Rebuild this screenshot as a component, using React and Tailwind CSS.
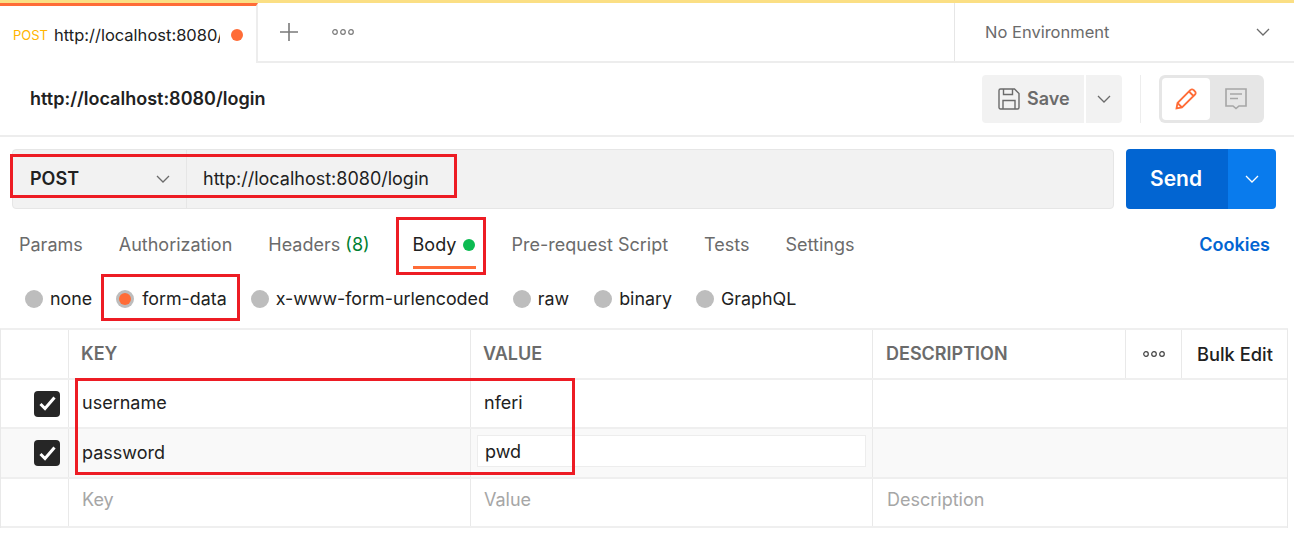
import React from "react";

const Chevron = ({ className = "", stroke = "#6b6b6b" }) => (
  <svg width="14" height="8" viewBox="0 0 14 8" fill="none" className={className}>
    <path d="M1 1l6 6 6-6" stroke={stroke} strokeWidth="1.3" />
  </svg>
);

const Dots = ({ stroke = "#6b6b6b" }) => (
  <svg width="22" height="6" viewBox="0 0 22 6" fill="none">
    <circle cx="3" cy="3" r="2.3" stroke={stroke} strokeWidth="1.2" />
    <circle cx="11" cy="3" r="2.3" stroke={stroke} strokeWidth="1.2" />
    <circle cx="19" cy="3" r="2.3" stroke={stroke} strokeWidth="1.2" />
  </svg>
);

const Check = () => (
  <div className="w-[26px] h-[26px] rounded-[4px] bg-[#262626] flex items-center justify-center">
    <svg width="17" height="15" viewBox="0 0 17 15" fill="none">
      <path d="M1.500 8l4.500 4.500 9.500-11" stroke="#fff" strokeWidth="3" />
    </svg>
  </div>
);

const Radio = ({ label, active, className = "" }) => (
  <div className={`flex items-center ${active ? "gap-[8px]" : "gap-[7px]"} ${className}`}>
    <div className="w-[18px] h-[18px] rounded-full bg-[#bdbdbd] flex items-center justify-center">
      {active && <div className="w-[12px] h-[12px] rounded-full bg-[#ff6c37]" />}
    </div>
    <span className="text-[#212121] text-[17.85px]">{label}</span>
  </div>
);

const Row = ({ bg = "bg-white", h, check, k, v, kc = "text-[#212121]", pb = "pb-[2px]", children }) => (
  <div className={`flex border-b-2 border-[#efefef] ${bg} ${h}`}>
    <div className="w-[68px] border-r border-[#e9e9e9] flex items-center justify-end pr-[8px] shrink-0">{check && <Check />}</div>
    <div className={`w-[402px] border-r border-[#e9e9e9] flex items-center pl-[13px] shrink-0 ${pb} ${kc}`}>{k}</div>
    <div className={`w-[402px] border-r border-[#e9e9e9] flex items-center pl-[13px] shrink-0 ${pb} ${kc}`}>{v}</div>
    <div className={`flex-1 flex items-center pl-[14px] ${pb} ${kc}`}>{children}</div>
  </div>
);

const Tab = ({ children, className = "" }) => <span className={`text-[#6b6b6b] ${className}`}>{children}</span>;

export default function App() {
  return (
    <div className="relative w-[1294px] h-[543px] overflow-hidden bg-white text-[18px] leading-[24px] font-['Inter','Liberation_Sans',sans-serif]">
      <div className="h-[3px] bg-[#fbdf84]" />
      {/* tab bar */}
      <div className="flex h-[60px] border-b-2 border-[#ededed]">
        <div className="w-[258px] h-[60px] border-t-[3px] border-[#ff6c37] border-r-2 border-r-[#ededed] bg-white flex items-center pl-[13px] shrink-0">
          <span className="text-[13px] text-[#ffb400] mr-[6px]">POST</span>
          <span className="w-[166px] overflow-hidden whitespace-nowrap text-[#212121] text-[16.5px]">http://localhost:8080/login</span>
          <span className="ml-[11px] w-[12px] h-[12px] rounded-full bg-[#ff6c37]" />
        </div>
        <div className="flex-1 flex items-center">
          <svg width="20" height="20" viewBox="0 0 20 20" className="ml-[21px]">
            <path d="M10 1v18M1 10h18" stroke="#7a7a7a" strokeWidth="1.6" />
          </svg>
          <div className="ml-[33px]"><Dots stroke="#7a7a7a" /></div>
        </div>
        <div className="w-[340px] border-l border-[#e6e6e6] flex items-center pl-[30px] pr-[24px] justify-between shrink-0 text-[#6b6b6b] text-[16.5px]">
          <span>No Environment</span>
          <Chevron />
        </div>
      </div>
      {/* title row */}
      <div className="flex items-center h-[74px] border-b-2 border-[#ededed] pl-[30px]">
        <span className="font-semibold text-[#212121]">http://localhost:8080/login</span>
        <div className="ml-auto flex items-center pr-[30px]">
          <div className="w-[102px] h-[48px] rounded-l-[4px] bg-[#f2f2f2] flex items-center pl-[16px] gap-[7px]">
            <svg width="22" height="22" viewBox="0 0 22 22" fill="none" stroke="#6b6b6b" strokeWidth="1.4">
              <path d="M1 2.500A1.500 1.500 0 0 1 2.500 1H16.500l4.500 4.500v14a1.500 1.500 0 0 1-1.500 1.500h-17A1.500 1.500 0 0 1 1 19.500z" />
              <path d="M5.500 1v5.500h9V1M5 21v-8.500h12V21" />
            </svg>
            <span className="font-semibold text-[#6b6b6b]">Save</span>
          </div>
          <div className="ml-[2px] w-[36px] h-[48px] rounded-r-[4px] bg-[#f2f2f2] flex items-center justify-center"><Chevron /></div>
          <div className="ml-[18px] w-px h-[48px] bg-[#ededed]" />
          <div className="ml-[18px] w-[105px] h-[48px] rounded-[6px] bg-[#e6e6e6] p-[3px] flex">
            <div className="w-[48px] h-[42px] rounded-[4px] bg-white flex items-center justify-center">
              <svg width="22" height="22" viewBox="0 0 22 22" fill="none" stroke="#ff6c37" strokeWidth="1.8">
                <path d="M1.500 20.500l1-5.500L15.500 2a2 2 0 0 1 3 0l1.500 1.500a2 2 0 0 1 0 3L7 19.500zM14 3.500l4.500 4.500M2.500 15L7 19.500" />
              </svg>
            </div>
            <div className="flex-1 flex items-center justify-center">
              <svg width="22" height="22" viewBox="0 0 22 22" fill="none" stroke="#a6a6a6" strokeWidth="1.6">
                <path d="M1 1h20v17h-7l-3 2.500L8 18H1zM5 6h12M5 10.500h8" />
              </svg>
            </div>
          </div>
        </div>
      </div>
      {/* request row */}
      <div className="flex mt-[12px] pl-[12px] pr-[18px]">
        <div className="w-[1102px] h-[60px] rounded-[4px] bg-[#f2f2f2] border border-[#e6e6e6] flex shrink-0">
          <div className="w-[174px] border-r border-[#e6e6e6] flex items-center justify-between pl-[17px] pr-[16px] shrink-0">
            <span className="font-semibold text-[#212121]">POST</span>
            <Chevron />
          </div>
          <div className="flex items-center pl-[16px] text-[#212121]">http://localhost:8080/login</div>
        </div>
        <div className="ml-[12px] w-[150px] h-[60px] rounded-[4px] overflow-hidden flex text-white">
          <div className="w-[102px] pr-[2px] bg-[#0265d2] flex items-center justify-center text-[21px] font-semibold">Send</div>
          <div className="flex-1 bg-[#097bed] flex items-center justify-center"><Chevron stroke="#ffffff" /></div>
        </div>
      </div>
      {/* tabs */}
      <div className="flex items-start h-[60px] pl-[19px] pr-[24px] pt-[24px] mt-0">
        <Tab>Params</Tab>
        <Tab className="ml-[36px]">Authorization</Tab>
        <Tab className="ml-[36px]">Headers <span className="text-[#007f31]">(8)</span></Tab>
        <div className="ml-[43px] flex flex-col">
          <div className="flex items-center gap-[7px]">
            <span className="text-[#212121]">Body</span>
            <span className="w-[12px] h-[12px] rounded-full bg-[#0cbb52]" />
          </div>
          <div className="h-[3px] mt-[9px] bg-[#ff6c37] w-[63px]" />
        </div>
        <Tab className="ml-[36px]">Pre-request Script</Tab>
        <Tab className="ml-[36px]">Tests</Tab>
        <Tab className="ml-[36px]">Settings</Tab>
        <span className="ml-auto font-semibold text-[#0265d2]">Cookies</span>
      </div>
      {/* radios */}
      <div className="flex items-center h-[60px] pl-[25px] pb-[1px]">
        <Radio label="none" />
        <Radio label="form-data" active className="ml-[24px]" />
        <Radio label="x-www-form-urlencoded" className="ml-[24px]" />
        <Radio label="raw" className="ml-[24px]" />
        <Radio label="binary" className="ml-[25px]" />
        <Radio label="GraphQL" className="ml-[24px]" />
      </div>
      {/* table */}
      <div className="border-t-2 border-[#efefef] mt-[-1px] border-x border-x-[#e9e9e9] w-[1288px]">
        <div className="flex h-[50px] border-b-2 border-[#efefef] font-semibold text-[#6b6b6b]">
          <div className="w-[68px] border-r border-[#e9e9e9] shrink-0" />
          <div className="w-[402px] border-r border-[#e9e9e9] flex items-center pl-[12px] shrink-0">KEY</div>
          <div className="w-[402px] border-r border-[#e9e9e9] flex items-center pl-[12px] shrink-0">VALUE</div>
          <div className="w-[253px] border-r border-[#e9e9e9] flex items-center pl-[13px] shrink-0">DESCRIPTION</div>
          <div className="w-[56px] border-r border-[#e9e9e9] flex items-center justify-center shrink-0"><Dots stroke="#444444" /></div>
          <div className="flex-1 flex items-center pl-[15px] text-[#212121] font-medium text-[18.3px]">Bulk Edit</div>
        </div>
        <Row h="h-[49px]" check k="username" v="nferi" />
        <Row h="h-[50px]" bg="bg-[#f9f9f9]" check k="password" pb="pb-[1px]"
          v={<div className="-ml-[7px] pl-[7px] pt-[2px] -mt-[4px] w-[389px] h-[32px] bg-white border border-[#ededed] flex items-center">pwd</div>} />
        <Row h="h-[49px]" k="Key" v="Value" kc="text-[#a6a6a6]" pb="pb-[6px]">Description</Row>
      </div>
      {/* annotation boxes */}
      <div className="absolute left-[10px] top-[154px] w-[447px] h-[44px] border-[3px] border-[#ed1c24]" />
      <div className="absolute left-[396px] top-[217px] w-[90px] h-[58px] border-[3px] border-[#ed1c24]" />
      <div className="absolute left-[101px] top-[274px] w-[139px] h-[47px] border-[3px] border-[#ed1c24]" />
      <div className="absolute left-[75px] top-[378px] w-[500px] h-[97px] border-[3px] border-[#ed1c24]" />
    </div>
  );
}
